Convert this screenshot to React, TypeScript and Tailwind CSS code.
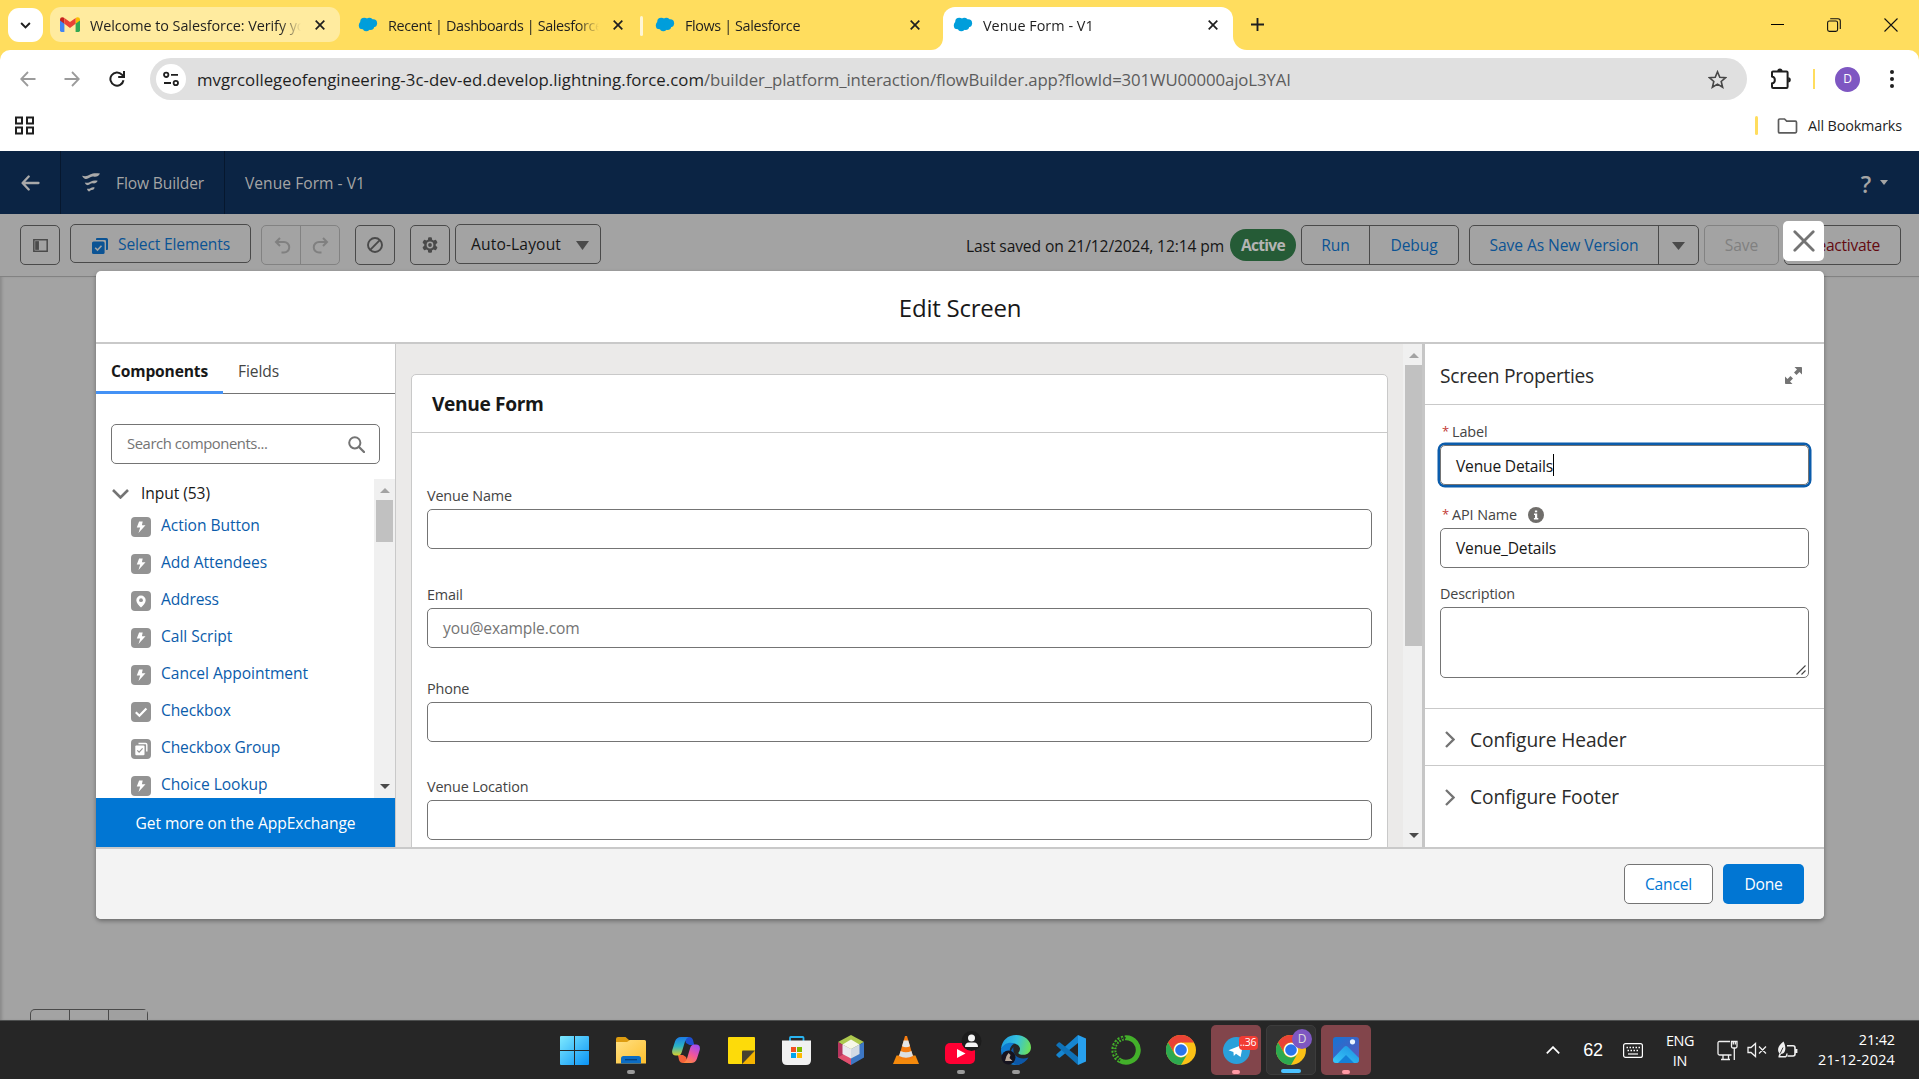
import React, { type ReactNode } from 'react';

type Cls = { className?: string };

/* ---------- shared glyphs ---------- */

const Cloud = () => (
  <svg viewBox="0 0 20 16" className="h-[15px] w-5 shrink-0" fill="#009edb">
    <circle cx="6" cy="5" r="4.3" />
    <circle cx="11.5" cy="4.6" r="3.8" />
    <circle cx="15.5" cy="6.6" r="4.2" />
    <circle cx="4.3" cy="9" r="4.1" />
    <circle cx="8.2" cy="11.3" r="3.9" />
    <circle cx="12.6" cy="9.8" r="4" />
  </svg>
);

const Gmail = () => (
  <svg viewBox="0 0 20 15" className="h-[15px] w-5 shrink-0">
    <path d="M0 2.4V13.6Q0 15 1.4 15H4.4V6z" fill="#4285f4" />
    <path d="M20 2.4V13.6Q20 15 18.6 15H15.6V6z" fill="#34a853" />
    <path d="M0 2.6C0 0 2.6-.5 4.4.9V6.8L0 3.5z" fill="#c5221f" />
    <path d="M20 2.6C20 0 17.4-.5 15.6.9V6.8L20 3.5z" fill="#fbbc04" />
    <path d="M4.4.9L10 5.1 15.6.9V6.8L10 11 4.4 6.8z" fill="#ea4335" />
  </svg>
);

const TabClose = ({ className = '' }: Cls) => (
  <svg viewBox="0 0 10 10" className={`size-[10px] shrink-0 ${className}`} stroke="#1f1f1f" strokeWidth="1.7">
    <path d="M.7.7l8.6 8.6M9.3.7L.7 9.3" />
  </svg>
);

const Caret = ({ className = '' }: Cls) => (
  <svg viewBox="0 0 13 9" className={`shrink-0 ${className}`} fill="currentColor" preserveAspectRatio="none">
    <path d="M0 0H13L6.5 9z" />
  </svg>
);

const StackCheck = ({ className = '', mark }: Cls & { mark: string }) => (
  <svg viewBox="0 0 16 16" className={`shrink-0 ${className}`}>
    <path d="M5 0H14.4Q16 0 16 1.6V11Q16 12 15 12H14V3.2Q14 2 12.8 2H4V1Q4 0 5 0z" fill="currentColor" />
    <rect x="0" y="3.4" width="12.6" height="12.6" rx="1.6" fill="currentColor" />
    <path d="M3.2 9.8l2.3 2.3 4-4.3" stroke={mark} strokeWidth="1.6" fill="none" />
  </svg>
);

/* ---------- browser chrome ---------- */

const Tab = ({ icon, title, className, titleClass }: { icon: ReactNode; title: string; className: string; titleClass: string }) => (
  <div className={`flex h-[35px] shrink-0 items-center ${className}`}>
    {icon}
    <span
      className={`ml-[10px] w-[212px] overflow-hidden whitespace-nowrap pt-[2px] text-[14.4px] text-[#1f1f1f] [mask-image:linear-gradient(to_right,black_190px,transparent_211px)] ${titleClass}`}
    >
      {title}
    </span>
    <TabClose className="ml-[13px]" />
  </div>
);

const TabStrip = () => (
  <div className="flex h-[50px] bg-[#ffdd5e] pl-2 pt-[8px]">
    <div className="flex h-[34px] w-[35px] shrink-0 items-center justify-center rounded-[11px] bg-white">
      <svg viewBox="0 0 12 8" className="h-[7px] w-[11px]" fill="none" stroke="#1f1f1f" strokeWidth="2.2">
        <path d="M1 1.2l5 5 5-5" />
      </svg>
    </div>
    <Tab icon={<Gmail />} title="Welcome to Salesforce: Verify yo" className="-mt-px ml-[7px] w-[290px] rounded-[11px] bg-[#ffeb9f] pl-[10px]" titleClass="tracking-[-0.06px]" />
    <Tab icon={<Cloud />} title="Recent | Dashboards | Salesforce" className="-mt-px w-[300px] pl-[18px]" titleClass="tracking-[-0.37px]" />
    <span className="mt-[8px] h-[20px] w-[3px] shrink-0 rounded-sm bg-[#fff6d5]" />
    <Tab icon={<Cloud />} title="Flows | Salesforce" className="-mt-px w-[289px] pl-[12px]" titleClass="tracking-[-0.38px]" />
    <div className="flex">
      <div className="-ml-px h-[42px] w-[12px] self-end bg-white">
        <div className="h-full w-full rounded-br-[14px] bg-[#ffdd5e]" />
      </div>
      <div className="-mt-px h-[43px] w-[290px] rounded-t-[12px] bg-white">
        <Tab icon={<Cloud />} title="Venue Form - V1" className="pl-[10px]" titleClass="tracking-[0.02px]" />
      </div>
      <div className="h-[42px] w-[14px] self-end bg-white">
        <div className="h-full w-full rounded-bl-[14px] bg-[#ffdd5e]" />
      </div>
    </div>
    <svg viewBox="0 0 14 14" className="ml-[4px] mt-[10px] size-[13px]" stroke="#1f1f1f" strokeWidth="2">
      <path d="M7 0V14M0 7H14" />
    </svg>
    <div className="ml-auto mr-[21px] flex h-[33px] items-center">
      <span className="h-px w-[13px] bg-black" />
      <svg viewBox="0 0 14 14" className="ml-[43px] size-[14px]" fill="none" stroke="#111" strokeWidth="1.1">
        <rect x=".6" y="3" width="10" height="10.4" rx="1.8" />
        <path d="M3.2 .8H11Q13.3 .8 13.3 3V11" />
      </svg>
      <svg viewBox="0 0 14 14" className="ml-[43px] size-[14px]" stroke="#111" strokeWidth="1.1">
        <path d="M.5.5l13 13M13.5.5l-13 13" />
      </svg>
    </div>
  </div>
);

const AddressBar = () => (
  <div className="bg-[#ffdd5e]">
    <div className="flex h-[58px] items-center rounded-t-[10px] bg-white pl-[20px]">
      <svg viewBox="0 0 16 16" className="size-[16px]" fill="none" stroke="#9b9b9b" strokeWidth="1.8">
        <path d="M15.5 8H1.5M8 1L1.2 8 8 15" />
      </svg>
      <svg viewBox="0 0 16 16" className="ml-[28px] size-[16px]" fill="none" stroke="#9b9b9b" strokeWidth="1.8">
        <path d="M.5 8H14.5M8 1l6.800 7L8 15" />
      </svg>
      <svg viewBox="0 0 16 16" className="ml-[29px] size-[16px]" fill="none" stroke="#1f1f1f" strokeWidth="2">
        <path d="M14.500 9.200A6.600 6.600 0 1 1 12.900 3.600L14.500 5.400" />
        <path d="M15 0V5.900H9.200" />
      </svg>
      <div className="ml-[25px] flex h-[42px] w-[1597px] items-center rounded-full bg-[#e0e0e0] pl-[6px]">
        <div className="flex size-[30px] items-center justify-center rounded-full bg-white">
          <svg viewBox="0 0 16 16" className="size-[16px]" fill="none" stroke="#1f1f1f" strokeWidth="1.8">
            <circle cx="3.200" cy="3.800" r="2.200" />
            <path d="M8 3.800H15M1 12H8" />
            <circle cx="12.800" cy="12" r="2.200" />
          </svg>
        </div>
        <div className="ml-[11px] whitespace-nowrap pt-[2px] text-[16.8px] leading-none">
          <span className="tracking-[0.02px] text-[#1f1f1f]">mvgrcollegeofengineering-3c-dev-ed.develop.lightning.force.com</span>
          <span className="tracking-[-0.11px] text-[#5c5c5c]">/builder_platform_interaction/flowBuilder.app?flowId=301WU00000ajoL3YAI</span>
        </div>
        <svg viewBox="0 0 20 20" className="ml-auto mr-[20px] size-[19px]" fill="none" stroke="#474747" strokeWidth="1.700">
          <path d="M10 1.900l2.400 5.700 6.200.500-4.700 4 1.500 6.100L10 14.900l-5.400 3.300 1.500-6.100-4.700-4 6.200-.5z" />
        </svg>
      </div>
      <svg viewBox="0 0 22 22" className="ml-[23px] size-[22px]">
        <path d="M2 4.200Q2 3.400 3 3.400H16.500Q17.600 3.400 17.600 4.500V18.800Q17.600 20 16.500 20H3.200Q2 20 2 18.800V15.400C5.800 14.800 5.800 9 2 8.400z" fill="none" stroke="#1f1f1f" strokeWidth="2" />
        <path d="M7.300 3a2.600 2.600 0 0 1 5.200 0zM18.200 9.200a2.600 2.600 0 0 1 0 5.200z" fill="#1f1f1f" />
      </svg>
      <span className="ml-[21px] h-[20px] w-[2px] bg-[#ffdd5e]" />
      <span className="ml-[20px] flex size-[25px] items-center justify-center rounded-full bg-[#7e57c2] text-[12px] text-white">D</span>
      <span className="ml-[30px] flex flex-col gap-[3px]">
        <i className="size-[4px] rounded-full bg-[#1f1f1f]" />
        <i className="size-[4px] rounded-full bg-[#1f1f1f]" />
        <i className="size-[4px] rounded-full bg-[#1f1f1f]" />
      </span>
    </div>
  </div>
);

const BookmarkBar = () => (
  <div className="flex h-[43px] items-center bg-white pb-[8px] pl-[15px] pr-[17px]">
    <svg viewBox="0 0 19 19" className="size-[19px]" fill="none" stroke="#1f1f1f" strokeWidth="2">
      <rect x="1" y="1.500" width="6" height="6" />
      <rect x="12" y="1.500" width="6" height="6" />
      <rect x="1" y="11.500" width="6" height="6" />
      <rect x="12" y="11.500" width="6" height="6" />
    </svg>
    <span className="ml-auto h-[19px] w-[3px] rounded bg-[#ffdd5e]" />
    <svg viewBox="0 0 20 16" className="ml-[19px] h-[16px] w-[21px]" fill="none" stroke="#5c5c5c" strokeWidth="1.700">
      <path d="M1 13.600V2.200Q1 1 2.200 1H7L9.200 3.200H17.800Q19 3.200 19 4.400V13.600Q19 14.900 17.800 14.900H2.200Q1 14.900 1 13.600z" />
    </svg>
    <span className="ml-[10px] text-[14.4px] tracking-[-0.15px] text-[#1f1f1f]">All Bookmarks</span>
  </div>
);

/* ---------- flow builder page (dimmed) ---------- */

const BuilderHeader = () => (
  <div className="flex h-[63px] items-center bg-[#0b2444] text-[15.6px] text-[#a5a5a5]">
    <div className="flex h-full w-[61px] items-center border-r border-[#06172e] pl-[21px]">
      <svg viewBox="0 0 19 16" className="h-[16px] w-[19px]" fill="none" stroke="#a9a9a9" strokeWidth="2.300" strokeLinecap="round" strokeLinejoin="round">
        <path d="M17.500 8H2M7.700 1.500L1.600 8l6.100 6.500" />
      </svg>
    </div>
    <div className="flex h-full w-[164px] items-center border-r border-[#06172e] pl-[21px]">
      <svg viewBox="0 0 18 19" className="h-[19px] w-[18px]" fill="#a9a9a9">
        <path d="M0 2.800C3.500 3.500 5 3.300 8 1.500 11 0 14 0 18 .6 16.500 3.200 14.500 4.200 11.500 3.600 8 2.900 7 6.400 3.500 5.900 1.800 5.600.8 4.200 0 2.800z" />
        <path d="M2.800 9.600C5.500 10 7 9.800 9 8.500 11 7.200 13 7.200 15.700 7.700 14.500 10 13 10.700 10.700 10.300 8.200 9.900 7.400 12.500 5.200 12.100 4 11.900 3.300 10.900 2.800 9.600z" />
        <path d="M5 15.800C6.600 16 7.600 15.800 8.800 15 10 14.200 11.200 14.200 12.700 14.500 12 16.500 11 17 9.700 16.900 8.300 16.800 8 18.500 6.900 18.400 6 18.300 5.300 17 5 15.800z" />
      </svg>
      <span className="ml-[16px] pt-[2px] tracking-[-0.14px]">Flow Builder</span>
    </div>
    <span className="ml-[20px] pt-[2px] tracking-[0.03px]">Venue Form - V1</span>
    <span className="ml-auto pt-[3px] text-[23px] font-semibold leading-none">?</span>
    <Caret className="ml-[9px] mr-[31px] h-[5px] w-[8px]" />
  </div>
);

const box = 'flex h-[40px] shrink-0 items-center rounded-[5px] border border-[#4a4a4a]';

const BuilderToolbar = () => (
  <div className="flex h-[63px] border-b border-[#828282] bg-[#a3a3a3] pt-[11px] text-[15.6px] text-[#4a4a4a]">
    <div className={`${box} ml-[20px] w-[40px] justify-center`}>
      <svg viewBox="0 0 16 14" className="h-[13px] w-[15px]">
        <rect x=".8" y=".8" width="14.400" height="12.400" fill="none" stroke="#4a4a4a" strokeWidth="1.600" />
        <rect x="2.300" y="2.300" width="4" height="9.400" fill="#4a4a4a" />
      </svg>
    </div>
    <div className="-mt-px ml-[10px] flex h-[39px] w-[181px] shrink-0 items-center rounded-[5px] border border-[#4a4a4a] pl-[21px] text-[#0b5394]">
      <StackCheck className="mt-[4px] size-[16px]" mark="#a3a3a3" />
      <span className="ml-[10px] pt-[3px] tracking-[-0.15px]">Select Elements</span>
    </div>
    <div className="ml-[10px] flex h-[40px] w-[79px] shrink-0 rounded-[5px] border border-[#828282]">
      <div className="flex w-[39px] items-center justify-center border-r border-[#828282] pl-[2px]">
        <svg viewBox="0 0 16 17" className="size-[17px]" fill="none" stroke="#808080" strokeWidth="2">
          <path d="M5.500 1L1.500 5l4 4M1.500 5H9.500a5 5 0 0 1 0 10.500H7" />
        </svg>
      </div>
      <div className="flex flex-1 items-center justify-center">
        <svg viewBox="0 0 16 17" className="size-[17px] -scale-x-100" fill="none" stroke="#808080" strokeWidth="2">
          <path d="M5.500 1L1.500 5l4 4M1.500 5H9.500a5 5 0 0 1 0 10.500H7" />
        </svg>
      </div>
    </div>
    <div className={`${box} ml-[15px] w-[40px] justify-center`}>
      <svg viewBox="0 0 16 16" className="size-[16px]" fill="none" stroke="#4a4a4a" strokeWidth="1.900">
        <circle cx="8" cy="8" r="7" />
        <path d="M3.200 12.800l9.600-9.600" />
      </svg>
    </div>
    <div className={`${box} ml-[15px] w-[40px] justify-center`}>
      <svg viewBox="-8 -8 16 16" className="size-[16px]">
        <g fill="#4a4a4a">
          <rect x="-2" y="-7.800" width="4" height="15.600" rx="1.200" />
          <rect x="-2" y="-7.800" width="4" height="15.600" rx="1.200" transform="rotate(60)" />
          <rect x="-2" y="-7.800" width="4" height="15.600" rx="1.200" transform="rotate(120)" />
          <circle r="5.800" />
        </g>
        <circle r="3.400" fill="#a3a3a3" />
        <circle r="1.900" fill="#4a4a4a" />
      </svg>
    </div>
    <div className={`${box} -mt-px ml-[5px] w-[146px] pl-[15px] text-[#161616]`}>
      <span className="pt-[2px] tracking-[0.14px]">Auto-Layout</span>
      <Caret className="ml-auto mr-[11px] mt-[3px] h-[9px] w-[13px] text-[#4a4a4a]" />
    </div>
    <span className="ml-auto flex h-[44px] items-center tracking-[-0.11px] text-[#161616]">Last saved on 21/12/2024, 12:14 pm</span>
    <span className="ml-[6px] mt-[4px] flex h-[32px] w-[66px] items-center justify-center rounded-full bg-[#255b36] pt-[2px] font-bold tracking-[-0.75px] text-[#b4b4b4]">
      Active
    </span>
    <div className={`${box} ml-[5px] w-[158px] text-[#0b5394]`}>
      <span className="flex h-full w-[68px] items-center justify-center border-r border-[#4a4a4a] pt-[2px]">Run</span>
      <span className="flex-1 pt-[2px] text-center tracking-[-0.13px]">Debug</span>
    </div>
    <div className={`${box} ml-[10px] w-[230px] text-[#0b5394]`}>
      <span className="flex h-full w-[189px] items-center justify-center border-r border-[#4a4a4a] pt-[2px] tracking-[-0.08px]">Save As New Version</span>
      <span className="flex flex-1 justify-center pt-[2px]"><Caret className="h-[8px] w-[13px] text-[#4a4a4a]" /></span>
    </div>
    <div className="ml-[5px] flex h-[40px] w-[75px] shrink-0 items-center justify-center rounded-[5px] border border-[#828282] pt-[2px] text-[#808080]">Save</div>
    <div className={`${box} ml-[5px] mr-[18px] w-[117px] justify-end pr-[20px] pt-[2px] tracking-[-0.3px] text-[#640a10]`}>Deactivate</div>
  </div>
);

const BuilderCanvas = () => (
  <div className="flex flex-1 items-end bg-[#a3a3a3] pl-[30px] shadow-[inset_3px_0_3px_-1px_#8a8a8a]">
    <div className="flex h-[11px] w-[118px] rounded-t-[5px] border border-b-0 border-[#4a4a4a]">
      <span className="w-[39px] border-r border-[#4a4a4a]" />
      <span className="w-[39px] border-r border-[#4a4a4a]" />
      <span className="flex-1 bg-[#a0a0a0]" />
    </div>
  </div>
);

/* ---------- edit screen dialog ---------- */

const bolt = <path d="M11.400 4.500H7.800L5.500 10.600H8.900L7.200 16l7-7.700H10.600z" fill="#fff" transform="translate(0.300 0)" />;
const pin = (
  <g>
    <path d="M10 4.500a4.700 4.700 0 0 1 4.700 4.700C14.700 12 12 14.500 10 16.500 8 14.500 5.300 12 5.300 9.200A4.700 4.700 0 0 1 10 4.500z" fill="#fff" />
    <circle cx="10" cy="9.200" r="1.900" fill="#939393" />
  </g>
);
const tick = <path d="M4.800 10.300l3.600 3.500 7-7.400" fill="none" stroke="#fff" strokeWidth="2.200" />;
const stack = (
  <g>
    <path d="M7.500 4.500H14.500Q15.800 4.500 15.800 5.800V12.500" fill="none" stroke="#fff" strokeWidth="1.400" />
    <rect x="4.300" y="6.600" width="9.200" height="9.600" rx="1" fill="#fff" />
    <path d="M6.300 11.400l1.800 1.800 3.500-3.800" fill="none" stroke="#939393" strokeWidth="1.200" />
  </g>
);

const components: [string, ReactNode, string][] = [
  ['Action Button', bolt, 'tracking-[-0.05px]'],
  ['Add Attendees', bolt, 'tracking-[-0.05px]'],
  ['Address', pin, 'tracking-[-0.15px]'],
  ['Call Script', bolt, 'tracking-[-0.05px]'],
  ['Cancel Appointment', bolt, 'tracking-[-0.05px]'],
  ['Checkbox', tick, 'tracking-[-0.15px]'],
  ['Checkbox Group', stack, 'tracking-[-0.15px]'],
  ['Choice Lookup', bolt, 'tracking-[-0.05px]'],
];

const Scrollbar = ({ className, thumb }: { className: string; thumb: string }) => (
  <div className={`flex flex-col items-center bg-[#f0f0f0] ${className}`}>
    <Caret className="mt-[9px] h-[5px] w-[10px] rotate-180 text-[#a3a3a3]" />
    <span className={`mt-[7px] w-[17px] bg-[#c1c1c1] ${thumb}`} />
    <Caret className="mb-[9px] mt-auto h-[5px] w-[10px] text-[#4a4a4a]" />
  </div>
);

const ComponentsPanel = () => (
  <div className="flex w-[300px] shrink-0 flex-col border-r border-[#c9c9c9] bg-white">
    <div className="flex h-[50px] shrink-0 text-[15.6px]">
      <div className="w-[127px] border-b-[3px] border-[#4492f5] pl-[15px] pt-[16px] font-bold tracking-[-0.17px] text-[#181818]">Components</div>
      <div className="flex-1 border-b border-[#747474] pl-[15px] pt-[16px] tracking-[-0.11px] text-[#444]">Fields</div>
    </div>
    <div className="ml-[15px] mt-[30px] flex h-[40px] w-[269px] shrink-0 items-center rounded-[5px] border border-[#747474] pl-[15px] pr-[14px]">
      <span className="pb-px text-[14.8px] tracking-[-0.42px] text-[#747474]">Search components...</span>
      <svg viewBox="0 0 17 17" className="ml-auto size-[17px]" fill="none" stroke="#747474">
        <circle cx="6.800" cy="6.800" r="5.600" strokeWidth="2" />
        <path d="M11 11l5 5" strokeWidth="2.300" strokeLinecap="round" />
      </svg>
    </div>
    <div className="mt-[15px] flex h-[319px] shrink-0">
      <div className="flex-1 overflow-hidden">
        <div className="flex h-[30px] items-center pl-[16px]">
          <svg viewBox="0 0 17 10" className="h-[10px] w-[17px]" fill="none" stroke="#747474" strokeWidth="2.600">
            <path d="M1 1l7.500 7.500L16 1" />
          </svg>
          <span className="ml-[12px] text-[15.6px] tracking-[-0.07px] text-[#181818]">Input (53)</span>
        </div>
        {components.map(([name, glyph, cls]) => (
          <div key={name} className="flex h-[37px] items-center pb-[3px] pl-[35px]">
            <svg viewBox="0 0 20 20" className="mt-[2px] size-[20px] shrink-0">
              <rect width="20" height="20" rx="4" fill="#939393" />
              {glyph}
            </svg>
            <span className={`ml-[10px] text-[15.6px] text-[#0b5cab] ${cls}`}>{name}</span>
          </div>
        ))}
      </div>
      <Scrollbar className="w-[21px]" thumb="h-[42px]" />
    </div>
    <div className="flex flex-1 items-center justify-center bg-[#0176d3] pt-[2px] text-[15.6px] tracking-[-0.07px] text-white">Get more on the AppExchange</div>
  </div>
);

const PreviewField = ({ label, placeholder, className, labelClass = '' }: { label: string; placeholder?: string; className: string; labelClass?: string }) => (
  <div className={className}>
    <div className={`flex h-[20px] items-center text-[14.4px] tracking-[-0.15px] text-[#444] ${labelClass}`}>{label}</div>
    <div className="mt-[3px] flex h-[40px] items-center rounded-[5px] border border-[#747474] bg-white pl-[15px] pt-[2px] text-[15.6px] tracking-[-0.12px] text-[#747474]">{placeholder}</div>
  </div>
);

const FormPreview = () => (
  <div className="flex flex-1 overflow-hidden bg-[#ebeae9]">
    <div className="ml-[15px] mt-[30px] h-[520px] w-[977px] shrink-0 rounded-[5px] border border-[#c9c9c9] bg-white">
      <div className="flex h-[58px] items-center border-b border-[#c9c9c9] pl-[20px] pt-[2px] text-[19.2px] font-bold tracking-[-0.38px] text-[#181818]">Venue Form</div>
      <div className="px-[15px]">
        <PreviewField label="Venue Name" className="mt-[53px]" />
        <PreviewField label="Email" placeholder="you@example.com" className="mt-[36px]" />
        <PreviewField label="Phone" className="mt-[31px]" />
        <PreviewField label="Venue Location" className="mt-[35px]" />
      </div>
    </div>
    <Scrollbar className="ml-[15px] w-[21px] shrink-0" thumb="h-[281px]" />
  </div>
);

const Required = () => <span className="-mt-px mr-[3px] text-[13px] text-[#c23934]">*</span>;

const PropertiesPanel = () => (
  <div className="flex w-[402px] shrink-0 flex-col border-l-[3px] border-[#c6c6c6] bg-white">
    <div className="flex h-[61px] items-center border-b border-[#c9c9c9] pl-[15px] pr-[22px] pt-[4px]">
      <span className="pt-px text-[19.2px] tracking-[-0.28px] text-[#2b2b2b]">Screen Properties</span>
      <svg viewBox="0 0 17 17" className="mb-px ml-auto size-[17px]" fill="#747474">
        <path d="M9.500 0H16.200Q17 0 17 .8V7.500L14.500 5 11.500 8 9 5.500l3-3z" />
        <path d="M7.500 17H.8Q0 17 0 16.200V9.500L2.500 12l3-3L8 11.500l-3 3z" />
      </svg>
    </div>
    <div className="h-[304px] border-b border-[#c9c9c9] px-[15px] pt-[17px] text-[14.4px] text-[#444]">
      <div className="flex h-[20px] items-center pl-[2px]"><Required />Label</div>
      <div className="mt-[3px] flex h-[40px] w-[369px] items-center rounded-[5px] border border-[#747474] pl-[15px] text-[15.6px] tracking-[-0.2px] text-[#181818] shadow-[0_0_0_2.5px_#0b5cab]">
        <span className="pt-[3px]">Venue Details</span>
        <span className="h-[22px] w-px bg-black" />
      </div>
      <div className="mt-[20px] flex h-[20px] items-center pl-[2px]">
        <Required />API Name
        <svg viewBox="0 0 16 16" className="ml-[11px] size-[16px]">
          <circle cx="8" cy="8" r="8" fill="#706e6b" />
          <path d="M6.900 3.400H9.200V5.300H6.900zM6 6.600H9.200V11H10.300V12.400H5.900V11H7V8H6z" fill="#fff" />
        </svg>
      </div>
      <div className="mt-[3px] flex h-[40px] w-[369px] items-center rounded-[5px] border border-[#747474] pl-[15px] pt-[2px] text-[15.6px] tracking-[-0.18px] text-[#181818]">Venue_Details</div>
      <div className="mt-[16px] flex h-[20px] items-center tracking-[-0.17px]">Description</div>
      <div className="mt-[3px] flex h-[71px] w-[369px] items-end justify-end rounded-[5px] border border-[#747474] p-[2px]">
        <svg viewBox="0 0 10 10" className="size-[10px]" stroke="#444" strokeWidth="1.100">
          <path d="M.5 9.500l9-9M5.500 9.500l4-4" />
        </svg>
      </div>
    </div>
    {['Configure Header', 'Configure Footer'].map((title, i) => (
      <div key={title} className={`flex h-[57px] items-center pl-[20px] pt-[5px] ${i === 0 ? 'border-b border-[#c9c9c9]' : ''}`}>
        <svg viewBox="0 0 10 17" className="h-[17px] w-[10px]" fill="none" stroke="#747474" strokeWidth="2.300">
          <path d="M1 1l7.500 7.500L1 16" />
        </svg>
        <span className="ml-[15px] h-[24px] overflow-hidden text-[19.2px] leading-[24px] tracking-[-0.12px] text-[#2b2b2b]">{title}</span>
      </div>
    ))}
  </div>
);

const EditScreenDialog = () => (
  <div className="absolute left-[96px] top-[271px] flex h-[648px] w-[1728px] flex-col rounded-[5px] bg-white shadow-[0_2px_4px_rgba(0,0,0,0.35)]">
    <button className="absolute -top-[50px] right-0 flex h-[40px] w-[41px] items-center justify-center rounded-[5px] bg-white">
      <svg viewBox="0 0 22 22" className="size-[22px]" stroke="#747474" strokeWidth="2.800" strokeLinecap="round">
        <path d="M1.800 1.800l18.400 18.400M20.200 1.800L1.800 20.200" />
      </svg>
    </button>
    <div className="flex h-[73px] shrink-0 items-center justify-center border-b-2 border-[#c9c9c9] pt-[3px] text-[24px] tracking-[-0.25px] text-[#181818]">Edit Screen</div>
    <div className="flex h-[503px] shrink-0">
      <ComponentsPanel />
      <FormPreview />
      <PropertiesPanel />
    </div>
    <div className="flex flex-1 justify-end gap-[10px] rounded-b-[5px] border-t-2 border-[#c9c9c9] bg-[#f3f3f3] pr-[20px] pt-[15px] text-[15.6px] tracking-[-0.2px]">
      <button className="h-[40px] w-[89px] rounded-[5px] border border-[#747474] bg-white pt-[2px] text-[#0176d3]">Cancel</button>
      <button className="h-[40px] w-[81px] rounded-[5px] bg-[#0176d3] pt-[2px] text-white">Done</button>
    </div>
  </div>
);

/* ---------- taskbar ---------- */

const Chrome = () => (
  <svg viewBox="0 0 30 30" className="size-[30px]">
    <circle cx="15" cy="15" r="15" fill="#fbc116" />
    <path d="M2 7.500A15 15 0 0 1 28 7.500H15A7.500 7.500 0 0 0 8.500 18.800z" fill="#ea4335" />
    <path d="M2 7.500A15 15 0 0 0 15 30L21.500 18.800A7.500 7.500 0 0 1 8.500 18.800z" fill="#2da94f" />
    <circle cx="15" cy="15" r="7.200" fill="#fff" />
    <circle cx="15" cy="15" r="5.800" fill="#2a74ea" />
  </svg>
);

const WindowsLogo = () => (
  <svg viewBox="0 0 29 29" className="size-[29px]">
    <defs>
      <linearGradient id="win" gradientUnits="userSpaceOnUse" x1="0" y1="0" x2="29" y2="29">
        <stop offset="0" stopColor="#7eeaff" />
        <stop offset="1" stopColor="#0a93f5" />
      </linearGradient>
    </defs>
    <path d="M1 0H14V14H0V1Q0 0 1 0zM15 0H28Q29 0 29 1V14H15zM0 15H14V29H1Q0 29 0 28zM15 15H29V28Q29 29 28 29H15z" fill="url(#win)" />
  </svg>
);

const Explorer = () => (
  <svg viewBox="0 0 30 27" className="h-[27px] w-[30px]">
    <defs>
      <linearGradient id="fold" x1="0" y1="0" x2="1" y2="1"><stop offset="0" stopColor="#ffe083" /><stop offset="1" stopColor="#fdbf2d" /></linearGradient>
    </defs>
    <path d="M0 2Q0 0 2 0H9.500L13 3H26V8H0z" fill="#dd9c10" />
    <path d="M0 5H11L14 3H28.500Q30 3 30 4.500V26.500H0z" fill="url(#fold)" />
    <path d="M5 26.500V21.500Q5 19 7.500 19H22.500Q25 19 25 21.500V26.500z" fill="#0c6dc4" />
    <path d="M9 22.700H21" stroke="#063f78" strokeWidth="1.200" />
  </svg>
);

const Copilot = () => (
  <svg viewBox="0 0 28 26" className="h-[26px] w-[28px]">
    <defs>
      <linearGradient id="cpa" x1="0" y1="0" x2="0" y2="1"><stop offset="0" stopColor="#1b7be6" /><stop offset=".5" stopColor="#2bb4c4" /><stop offset="1" stopColor="#d8cf2c" /></linearGradient>
      <linearGradient id="cpb" x1="0.700" y1="0" x2="0.200" y2="1"><stop offset="0" stopColor="#a24cf0" /><stop offset=".5" stopColor="#f0559c" /><stop offset="1" stopColor="#ff8a3c" /></linearGradient>
    </defs>
    <path d="M12 0H17Q20 0 21 3L22.300 8H17.500L14 6z" fill="#1e4fd0" />
    <path d="M16 26H11Q8 26 7 23L6 18H11L14 20z" fill="#f4623a" />
    <path d="M9 0H16.500Q14 1 13 4.500L9.800 15Q9 18.500 5.500 18.500H4Q-.8 18.500.3 13L3 4.500Q4.500 0 9 0z" fill="url(#cpa)" />
    <path d="M19 26H11.500Q14 25 15 21.500L18.200 11Q19 7.500 22.500 7.500H24Q28.800 7.500 27.700 13L25 21.500Q23.500 26 19 26z" fill="url(#cpb)" />
  </svg>
);

const Sticky = () => (
  <svg viewBox="0 0 27 27" className="size-[27px]">
    <path d="M1 0H26Q27 0 27 1V14L14 27H1Q0 27 0 26V1Q0 0 1 0z" fill="#fddb0a" />
    <path d="M27 13.500V27H14z" fill="#f5b400" />
    <path d="M27 13.500H15Q14 13.500 14 14.500V27z" fill="#47412f" />
  </svg>
);

const Store = () => (
  <svg viewBox="0 0 29 29" className="size-[29px]">
    <path d="M8 6V1.800Q8 1 8.800 1H20.700Q21.500 1 21.500 1.800V6" fill="none" stroke="#29b4f0" strokeWidth="1.800" />
    <path d="M0 4.500H29V24Q29 29 24 29H5Q0 29 0 24z" fill="#f1f1f1" />
    <path d="M9 11h5v5H9z" fill="#f25022" />
    <path d="M15 11h5v5h-5z" fill="#7fba00" />
    <path d="M9 17h5v5H9z" fill="#00a4ef" />
    <path d="M15 17h5v5h-5z" fill="#ffb900" />
  </svg>
);

const NetBeans = () => (
  <svg viewBox="0 0 26 30" className="h-[30px] w-[26px]">
    <path d="M13 0l13 7-13 7.500L0 7z" fill="#adc94e" />
    <path d="M0 7l13 7.500V30L0 22.500z" fill="#b5355e" />
    <path d="M26 7L13 14.500V30l13-7.500z" fill="#3d77c4" />
    <path d="M0 22.500l7-4 6 3.500V30z" fill="#e0506e" />
    <path d="M13 4.500l8.500 5L13 14 4.500 9.500z" fill="#f6f7e8" />
    <path d="M4.500 9.500L13 14V23.500L4.500 19z" fill="#e9e9ee" />
    <path d="M21.500 9.500L13 14V23.500L21.500 19z" fill="#d3dae4" />
  </svg>
);

const Vlc = () => (
  <svg viewBox="0 0 26 28" className="h-[28px] w-[26px]">
    <path d="M3.500 19.500H22.500L26 28H0z" fill="#f58a0c" />
    <path d="M12 0H14L20.500 22Q13 26 5.500 22z" fill="#f47c12" />
    <path d="M10.700 4.500H15.300L17 10.300Q13 12 9 10.300z" fill="#e4e6e8" />
    <path d="M7.600 15Q13 17.500 18.400 15L20 20Q13 23.500 6 20z" fill="#dcdfe2" />
  </svg>
);

const YouTube = () => (
  <svg viewBox="0 0 40 34" className="-mt-[5px] ml-[8px] h-[34px] w-[40px]">
    <rect x="0" y="12" width="30" height="21" rx="5" fill="#ff0033" />
    <path d="M12 18l8.500 4.500L12 27z" fill="#fff" />
    <circle cx="26.500" cy="10" r="10" fill="#1c1c1c" />
    <circle cx="26.500" cy="7" r="3.500" fill="#f4f4f4" />
    <path d="M20 16Q20 11.500 24 11.500H29Q33 11.500 33 16z" fill="#f4f4f4" />
  </svg>
);

const Edge = () => (
  <svg viewBox="0 0 30 30" className="size-[30px]">
    <defs>
      <linearGradient id="edg" x1="0" y1="0.300" x2="1" y2="0.500"><stop offset="0" stopColor="#1e9de0" /><stop offset=".5" stopColor="#35c1df" /><stop offset="1" stopColor="#6ce05a" /></linearGradient>
    </defs>
    <path d="M0 14C1 5 7 0 15 0 24 0 30 6 30 12.500 30 17 26.500 19.800 22.500 19.800 18.500 19.800 17 18.500 17.500 17.500 18.500 16.500 19 15 19 13.500 18 8 8 5 0 14z" fill="url(#edg)" />
    <path d="M0 14C3 8 9 6.500 13.500 8.500 9 11 8 15 9 19 11 25 18 28 24 25.500 21 29 18 30 15 30 6 30-.5 23 0 14z" fill="#0f7cd0" />
    <path d="M12.500 12C11 20 18 26 27.500 22.500 24 28 19 30 15 30 9 27 7.500 17 12.500 12z" fill="#0d58a8" />
    <circle cx="7.500" cy="22.500" r="7" fill="#15131f" />
    <path d="M4 26l1.500-5 2-3 2 2-1 3 3 3z" fill="#b9a99a" />
  </svg>
);

const VsCode = () => (
  <svg viewBox="0 0 30 30" className="size-[30px]">
    <path d="M22 0V8L4 22.500Q3.300 23 2.600 22.500L.5 20.600Q0 20 .5 19.300z" fill="#1686d1" />
    <path d="M22 30V22L4 7.500Q3.300 7 2.600 7.500L.5 9.400Q0 10 .5 10.700z" fill="#0f72b8" />
    <path d="M22 0L30 3.500V26.500L22 30z" fill="#27a0ee" />
  </svg>
);

const Anaconda = () => (
  <svg viewBox="0 0 30 30" className="size-[30px]" fill="none" stroke="#43b02a">
    <path d="M15 2.800A12.200 12.200 0 1 1 9 25.600" strokeWidth="5" />
    <path d="M9 25.600A12.200 12.200 0 0 1 15 2.800" strokeWidth="5" strokeDasharray="2 1.400" />
    <path d="M9 25.600A12.200 12.200 0 0 1 15 2.800" strokeWidth="1.500" stroke="#272727" strokeDasharray="1.500 1" />
  </svg>
);

const Telegram = () => (
  <div className="relative">
    <svg viewBox="0 0 27 27" className="size-[27px]">
      <circle cx="13.500" cy="13.500" r="13.500" fill="#2ba0da" />
      <path d="M5.500 13.300L20 7.600 17.600 20 13 16.700l-2.200 2.200-.4-4z" fill="#fff" />
    </svg>
    <span className="absolute -top-[1px] left-[16px] flex h-[14px] w-[19px] items-center justify-center rounded-[4px] bg-[#f23c34] text-[10.5px] leading-none tracking-[-0.2px] text-white">..36</span>
  </div>
);

const ChromeProfile = () => (
  <div className="relative">
    <Chrome />
    <span className="absolute -top-[6px] left-[16px] flex size-[20px] items-center justify-center rounded-full bg-[#7e57c2] text-[12px] text-[#ddd]">D</span>
  </div>
);

const Photos = () => (
  <svg viewBox="0 0 26 26" className="size-[26px]">
    <defs>
      <linearGradient id="pho" x1="0" y1="0" x2="1" y2="1"><stop offset="0" stopColor="#1575d4" /><stop offset="1" stopColor="#6154b8" /></linearGradient>
      <linearGradient id="mnt" x1="0" y1="1" x2="1" y2="0"><stop offset="0" stopColor="#38c8fa" /><stop offset="1" stopColor="#1c8fe0" /></linearGradient>
    </defs>
    <rect width="26" height="26" rx="3" fill="url(#pho)" />
    <path d="M0 21.500L11 10Q13 8.200 15 10L26 21V23Q26 26 23 26H3Q0 26 0 23z" fill="url(#mnt)" />
    <path d="M13 18l8 8H5z" fill="#1480d8" />
    <circle cx="19.500" cy="4.800" r="2.600" fill="#e9f4ff" />
  </svg>
);

type TaskbarApp = { icon: ReactNode; tile?: string; dot?: string };
const apps: TaskbarApp[] = [
  { icon: <WindowsLogo />, tile: 'mr-[2px]' },
  { icon: <Explorer />, dot: 'w-[8px] bg-[#9a9a9a]' },
  { icon: <Copilot /> },
  { icon: <Sticky /> },
  { icon: <Store /> },
  { icon: <NetBeans /> },
  { icon: <Vlc /> },
  { icon: <YouTube />, dot: 'w-[8px] bg-[#9a9a9a]' },
  { icon: <Edge />, dot: 'w-[8px] bg-[#9a9a9a]' },
  { icon: <VsCode /> },
  { icon: <Anaconda /> },
  { icon: <Chrome /> },
  { icon: <Telegram />, tile: 'bg-[#82454b]', dot: 'w-[8px] bg-[#ff99a4]' },
  { icon: <ChromeProfile />, tile: 'bg-[#323232] border border-[#3c3c3c]', dot: 'w-[20px] bg-[#4cc2ff]' },
  { icon: <Photos />, tile: 'bg-[#82454b]', dot: 'w-[8px] bg-[#ff99a4]' },
];

const Taskbar = () => (
  <div className="flex h-[59px] shrink-0 items-center border-t border-[#4d4f4f] bg-[#262626] text-white">
    <div className="ml-[549px] flex gap-[5px]">
      {apps.map((app, i) => (
        <div key={i} className={`relative flex size-[50px] items-center justify-center rounded-[5px] ${app.tile ?? ''}`}>
          {app.icon}
          {app.dot && (
            <span className="absolute inset-x-0 bottom-px flex justify-center">
              <i className={`h-[4px] rounded-full ${app.dot}`} />
            </span>
          )}
        </div>
      ))}
    </div>
    <div className="ml-auto flex items-center pr-[24px] text-[14.4px]">
      <svg viewBox="0 0 14 8" className="h-[8px] w-[14px]" fill="none" stroke="#fff" strokeWidth="1.700">
        <path d="M.8 7.300L7 1.100l6.200 6.200" />
      </svg>
      <span className="ml-[23px] pt-px font-['Liberation_Sans'] text-[18px]">62</span>
      <svg viewBox="0 0 20 15" className="ml-[20px] h-[15px] w-[20px]" fill="none" stroke="#fff" strokeWidth="1.200">
        <rect x=".6" y=".6" width="18.800" height="13.800" rx="2" />
        <path d="M3.500 4.500H17M4.500 7.500H16" strokeDasharray="1.500 1.500" strokeWidth="1.500" />
        <path d="M5 11H15" />
      </svg>
      <span className="ml-[23px] flex flex-col items-center pt-px leading-[20px]">
        <span className="tracking-[-0.43px]">ENG</span>
        <span>IN</span>
      </span>
      <svg viewBox="0 0 21 21" className="ml-[23px] size-[21px]" fill="none" stroke="#f0f0f0" strokeWidth="1.300">
        <path d="M13 1.500H2.500Q1 1.500 1 3V13.500Q1 15 2.500 15H14.500M4 19.500H13M6 15V19.500M11.500 15V19.500" />
        <path d="M14.500 1.500H20V6.500Q20 8 18.500 8H16Q14.500 8 14.500 6.500zM17.300 8V20M16.300 1.500V4.500M18.300 1.500V4.500" />
      </svg>
      <svg viewBox="0 0 20 16" className="ml-[9px] h-[16px] w-[20px]" fill="none" stroke="#f0f0f0" strokeWidth="1.300">
        <path d="M1 5.500H4L8.500 1.500V14.500L4 10.500H1zM12 4.500l7 7M19 4.500l-7 7" />
      </svg>
      <svg viewBox="0 0 21 18" className="ml-[10px] h-[18px] w-[21px]" fill="none" stroke="#f0f0f0" strokeWidth="1.400">
        <path d="M10 4.800H16Q18 4.800 18 6.800V13Q18 15 16 15H10.500M19.600 8V12" strokeWidth="1.600" />
        <path d="M6.500 .5C1.500 4 -.5 9 2.500 12.500L1.500 15 3 15.500 4 13C9 13 9.500 6 6.500 .5z" fill="#f0f0f0" stroke="none" />
        <path d="M3.200 12.500L6 6.500" stroke="#262626" strokeWidth=".9" />
        <path d="M1.500 15.800H8.500Q10 15 10 12.500" />
      </svg>
      <span className="ml-[20px] flex flex-col items-end leading-[20px]">
        <span>21:42</span>
        <span className="tracking-[0.19px]">21-12-2024</span>
      </span>
    </div>
  </div>
);

export default function App() {
  return (
    <div className="relative flex h-[1079px] w-[1919px] flex-col overflow-hidden font-['Open_Sans','Noto_Sans',sans-serif] tracking-[-0.1px]">
      <TabStrip />
      <AddressBar />
      <BookmarkBar />
      <BuilderHeader />
      <BuilderToolbar />
      <BuilderCanvas />
      <Taskbar />
      <EditScreenDialog />
    </div>
  );
}
